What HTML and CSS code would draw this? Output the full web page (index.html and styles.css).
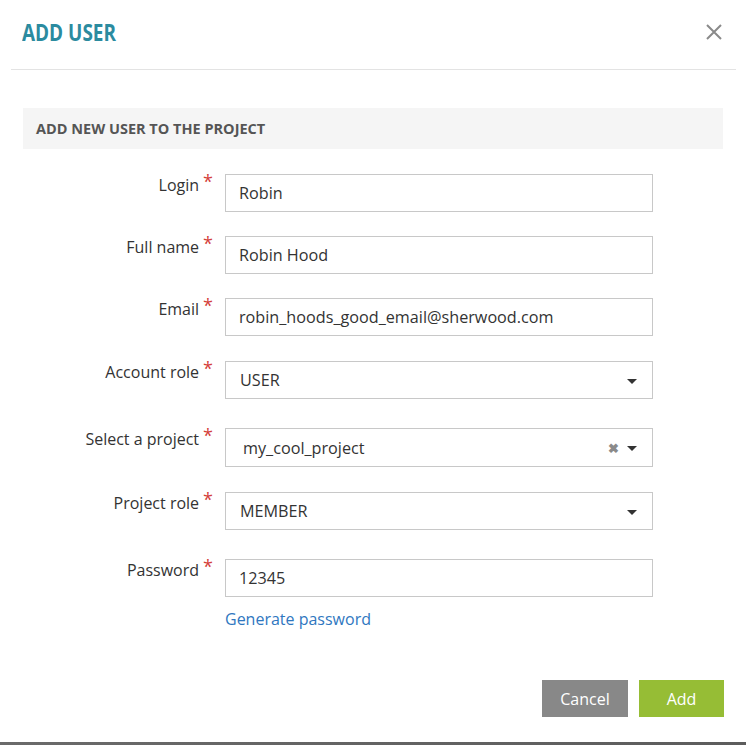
FILE: index.html
```html
<!DOCTYPE html>
<html>
<head>
<meta charset="utf-8">
<link rel="stylesheet" href="styles.css">
</head>
<body>
<div class="modal">
  <div class="modal-header">
    <h1 class="title"><span class="title-text">ADD USER</span></h1>
    <span class="close" aria-label="close">
      <svg width="16" height="16" viewBox="0 0 16 16"><path d="M1 1 L15 15 M15 1 L1 15" stroke="#8a8a8a" stroke-width="2" fill="none"/></svg>
    </span>
  </div>
  <div class="modal-body">
    <div class="section-head">ADD NEW USER TO THE PROJECT</div>
    <div class="form">
      <div class="row">
        <label class="label">Login<span class="req">*</span></label>
        <div class="field"><div class="input">Robin</div></div>
      </div>
      <div class="row">
        <label class="label">Full name<span class="req">*</span></label>
        <div class="field"><div class="input">Robin Hood</div></div>
      </div>
      <div class="row row-mid">
        <label class="label">Email<span class="req">*</span></label>
        <div class="field"><div class="input">robin_hoods_good_email@sherwood.com</div></div>
      </div>
      <div class="row row-wide">
        <label class="label">Account role<span class="req">*</span></label>
        <div class="field"><div class="input select"><span class="sel-text">USER</span><span class="caret"></span></div></div>
      </div>
      <div class="row row-mid">
        <label class="label">Select a project<span class="req">*</span></label>
        <div class="field"><div class="input select select2"><span class="sel-text">my_cool_project</span><span class="clear">&#10006;</span><span class="caret"></span></div></div>
      </div>
      <div class="row row-wide">
        <label class="label">Project role<span class="req">*</span></label>
        <div class="field"><div class="input select"><span class="sel-text">MEMBER</span><span class="caret"></span></div></div>
      </div>
      <div class="row row-last">
        <label class="label">Password<span class="req">*</span></label>
        <div class="field">
          <div class="input">12345</div>
          <a class="gen-link">Generate password</a>
        </div>
      </div>
    </div>
    <div class="actions">
      <button class="btn btn-cancel">Cancel</button>
      <button class="btn btn-add">Add</button>
    </div>
  </div>
</div>
</body>
</html>
```
FILE: styles.css
```css
html, body {
  margin: 0;
  padding: 0;
}
body {
  background: linear-gradient(to right, #6a6a6a, #5c5c5c);
  font-family: "Open Sans", "Liberation Sans", sans-serif;
  color: #333;
  height: 745px;
  overflow: hidden;
}
.modal {
  background: #fff;
  height: 742px;
  box-sizing: border-box;
}
.modal-header {
  margin: 0 10px 0 11px;
  height: 70px;
  border-bottom: 1px solid #e3e3e3;
  display: flex;
  align-items: center;
  justify-content: space-between;
  box-sizing: border-box;
}
.title {
  margin: 0 0 5px 11px;
  font-family: "Open Sans", sans-serif;
  font-weight: bold;
  font-size: 24px;
  color: #2b8b9f;
  line-height: 1;
}
.title-text {
  display: inline-block;
  transform: scaleX(0.79);
  transform-origin: left center;
}
.close {
  display: flex;
  margin-right: 14px;
  margin-bottom: 5px;
}
.modal-body {
  padding: 38px 22px 0 23px;
}
.section-head {
  background: #f5f5f5;
  height: 41px;
  display: flex;
  align-items: center;
  padding-left: 13px;
  margin-right: 1px;
  font-size: 14.5px;
  font-weight: bold;
  color: #555;
}
.form {
  padding-top: 25px;
}
.row {
  display: grid;
  grid-template-columns: 190px 428px;
  column-gap: 12px;
  margin-bottom: 24px;
}
.row-mid {
  margin-bottom: 25px;
}
.row-wide {
  margin-bottom: 29px;
}
.row-last {
  margin-bottom: 0;
}
.label {
  text-align: right;
  font-size: 16px;
  line-height: 22px;
  padding-top: 0;
  color: #333;
  white-space: nowrap;
}
.req {
  color: #d43f3a;
  font-size: 18px;
  display: inline-block;
  vertical-align: top;
  margin-left: 4px;
  line-height: 14px;
  position: relative;
  top: 0;
}
.input {
  height: 38px;
  box-sizing: border-box;
  border: 1px solid #c8c8c8;
  padding-left: 13px;
  font-size: 16.2px;
  display: flex;
  align-items: center;
  color: #333;
}
.select {
  padding-left: 14px;
  padding-right: 15px;
}
.select2 {
  height: 39px;
  padding-left: 17px;
}
.sel-text {
  flex: 1;
}
.caret {
  width: 0;
  height: 0;
  border-left: 5px solid transparent;
  border-right: 5px solid transparent;
  border-top: 5px solid #333;
  margin-top: 2px;
}
.clear {
  font-size: 13px;
  font-weight: bold;
  color: #8a8a8a;
  margin-right: 8px;
}
.gen-link {
  display: block;
  margin-top: 11px;
  font-size: 16px;
  line-height: 22px;
  color: #2f77bf;
}
.actions {
  display: flex;
  justify-content: flex-end;
  gap: 11px;
  margin-top: 50px;
}
.btn {
  border: 0;
  height: 37px;
  font-family: "Open Sans", "Liberation Sans", sans-serif;
  font-size: 16px;
  color: #fff;
  padding: 0;
}
.btn-cancel {
  background: #888;
  width: 86px;
}
.btn-add {
  background: #96bd35;
  width: 85px;
}
```
